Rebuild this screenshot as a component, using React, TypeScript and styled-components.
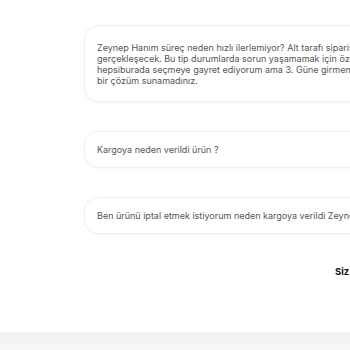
import { createGlobalStyle } from "styled-components";
import styled from "styled-components";

const GlobalStyle = createGlobalStyle`
  html, body {
    margin: 0;
    padding: 0;
    width: 350px;
    height: 350px;
    overflow: hidden;
    background: #fff;
    font-family: Inter, "Liberation Sans", sans-serif;
  }
`;

const Page = styled.div`
  width: 350px;
  height: 350px;
  display: flex;
  flex-direction: column;
  overflow: hidden;
`;

const Thread = styled.div`
  display: flex;
  flex-direction: column;
  gap: 29px;
  padding: 25px 0 0 84px;
`;

const Bubble = styled.div<{ $multi?: boolean }>`
  width: 440px;
  flex-shrink: 0;
  box-sizing: border-box;
  padding: ${(p) => (p.$multi ? "16px 12px 15px" : "12px 12px 12px")};
  border: 1px solid #efefef;
  border-radius: 14px;
  background: #fff;
  box-shadow: 0 1px 3px rgba(0, 0, 0, 0.03);
  font-size: 9px;
  line-height: 11px;
  color: #555;
  white-space: nowrap;
  overflow: hidden;
`;

const Sender = styled.div`
  margin-top: 32px;
  padding-left: 335px;
  font-size: 9.5px;
  font-weight: 700;
  color: #111;
  white-space: nowrap;
`;

const Footer = styled.div`
  margin-top: auto;
  height: 18px;
  background: linear-gradient(#f1f1f1, #f7f7f7);
`;

export default function App() {
  return (
    <Page>
      <GlobalStyle />
      <Thread>
        <Bubble $multi>
          Zeynep Hanım süreç neden hızlı ilerlemiyor? Alt tarafı siparişimi iptal etmek istiyorum
          <br />
          gerçekleşecek. Bu tip durumlarda sorun yaşamamak için özellikle
          <br />
          hepsiburada seçmeye gayret ediyorum ama 3. Güne girmemize rağmen
          <br />
          bir çözüm sunamadınız.
        </Bubble>
        <Bubble>Kargoya neden verildi ürün ?</Bubble>
        <Bubble>Ben ürünü iptal etmek istiyorum neden kargoya verildi Zeynep Hanım</Bubble>
      </Thread>
      <Sender>Siz</Sender>
      <Footer />
    </Page>
  );
}
